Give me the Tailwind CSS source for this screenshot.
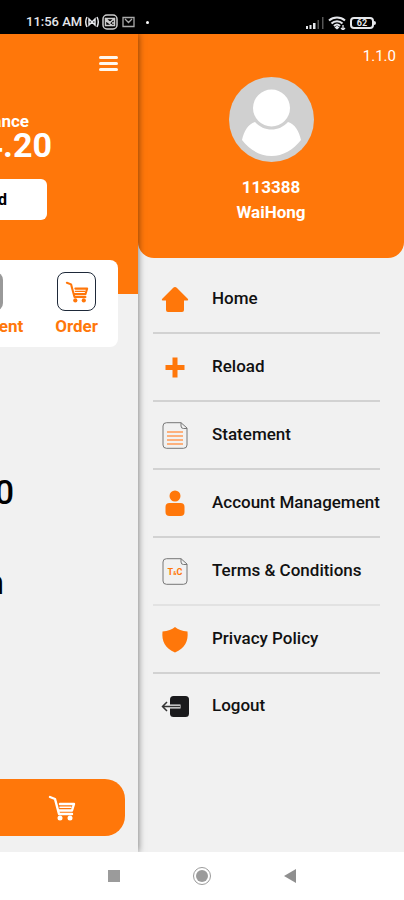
<!DOCTYPE html>
<html lang="en">
<head>
  <meta charset="UTF-8">
  <meta name="viewport" content="width=device-width, initial-scale=1.0">
  <title>Menu</title>
  <script src="https://cdn.jsdelivr.net/npm/@tailwindcss/browser@4"></script>
</head>
<body class="flex min-h-screen flex-col bg-white font-['Roboto','Liberation_Sans',sans-serif] text-black">

  <!-- Shared cart icon -->
  <svg class="hidden">
    <symbol id="cart" viewBox="0 0 28 26">
      <g fill="none" stroke="currentColor" stroke-width="2.400" stroke-linecap="round" stroke-linejoin="round">
        <path d="M2 2l5 2 4 15h13M12 9h14l-2 6.500H11" />
        <path d="M12 12.300h11" stroke-width="1.500" />
      </g>
      <circle cx="12" cy="23" r="2.500" fill="currentColor" />
      <circle cx="22" cy="23" r="2.500" fill="currentColor" />
    </symbol>
  </svg>

  <!-- Status bar -->
  <header class="flex h-[34px] items-end justify-between bg-black pr-7 pb-1 pl-[26px] text-gray-200">
    <div class="flex items-center gap-[3px]">
      <span class="text-[13px] leading-4 font-medium whitespace-nowrap">11:56 AM</span>
      <svg class="h-3 w-[14px]" viewBox="0 0 14 12" fill="none" stroke="currentColor" stroke-width="1.500">
        <path d="M2 1C.5 4 .5 8 2 11M12 1c1.500 3 1.500 7 0 10M4 3v6l3-3 3 3V3L7 6z" />
      </svg>
      <svg class="h-4 w-4" viewBox="0 0 16 16" fill="none" stroke="#ccc" stroke-width="1.500">
        <rect x="1" y="1" width="14" height="14" rx="4" />
        <path d="M3.500 4.500h9v7h-9zM3 4l5 4.500L13 4M3 6l8 6M10 9h3" />
      </svg>
      <svg class="ml-px h-3 w-[13px]" viewBox="0 0 13 12" fill="none" stroke="#aaa" stroke-width="1.300">
        <path d="M1 1.500h11v9H1zM3 3l3.500 3.500L10 3" />
      </svg>
      <span class="ml-2 h-[3px] w-[3px] rounded-full bg-white"></span>
    </div>
    <div class="flex items-center gap-1">
      <svg class="h-3 w-[19px]" viewBox="0 0 19 12" fill="currentColor">
        <path d="M1 9h2v3H1zM4.500 8h2v4h-2zM8 6h2.500v6H8z" />
        <path d="M12.500 3h1.500v9h-1.500zM17 0h1.500v12H17z" fill="#555" />
      </svg>
      <svg class="h-[14px] w-[18px]" viewBox="0 0 18 14" fill="none" stroke="currentColor" stroke-width="2">
        <path d="M1 4.500c4.500-4 11.500-4 16 0M3.500 7.500c3-3 8-3 11 0M6 10c1.800-1.800 4.200-1.800 6 0" />
        <path d="M9 9.500l2.500 2L9 13.500l-2.500-2z" fill="currentColor" stroke="none" />
        <path d="M15 9v5M13 12l2 2 2-2" stroke-width="1.300" />
      </svg>
      <div class="flex items-center">
        <span class="flex h-3 w-6 items-center justify-center rounded border-2 border-gray-200 text-[9px] leading-none font-bold">62</span>
        <span class="h-1 w-[2px] rounded-r bg-gray-200"></span>
      </div>
    </div>
  </header>

  <div class="flex flex-1">
    <!-- Page pushed to the left by the drawer -->
    <main class="relative z-10 flex w-[138px] shrink-0 flex-col overflow-hidden bg-[#f1f1f1] shadow-[0_0_7px_rgba(0,0,0,0.55)] [clip-path:inset(0_-12px_0_0)]">
      <section class="flex h-[260px] flex-col items-end bg-[#ff770a] text-white">
        <button type="button" aria-label="Menu" class="mt-[22px] mr-5 flex w-[19px] flex-col gap-[3px]">
          <span class="h-[3px] w-full rounded-full bg-orange-50"></span>
          <span class="h-[3px] w-full rounded-full bg-orange-50"></span>
          <span class="h-[3px] w-full rounded-full bg-orange-50"></span>
        </button>
        <p class="mt-10 mr-[109px] text-[17px] leading-5 font-bold">Balance</p>
        <p class="mr-[86px] text-[34px] leading-7 font-bold">4.20</p>
        <button type="button" class="mt-5 mr-[91px] h-[41px] rounded-md bg-white px-10 text-base font-bold text-black">Reload</button>
      </section>

      <section class="-mt-[34px] mr-5 flex h-[87px] justify-end gap-8 rounded-r-lg bg-white pr-5 text-[17px] leading-5 font-bold text-[#ff770a]">
        <a href="#" class="flex shrink-0 flex-col items-center gap-[5px] pt-3">
          <span class="h-[39px] w-[39px] rounded-lg bg-[#999]"></span>
          Statement
        </a>
        <a href="#" class="flex shrink-0 flex-col items-center gap-[5px] pt-3">
          <span class="flex h-[39px] w-[39px] items-center justify-center rounded-lg border border-gray-800">
            <svg class="h-[22px] w-6"><use href="#cart" /></svg>
          </span>
          Order
        </a>
      </section>

      <div class="mt-[125px] flex flex-col items-end text-[34px] leading-10 font-medium">
        <p class="mr-[124px]">0</p>
        <p class="mt-[50px] mr-[134px]">n</p>
      </div>

      <button type="button" aria-label="Cart" class="mt-auto mr-[13px] mb-4 flex h-[57px] items-center justify-end rounded-r-[20px] bg-[#ff770a] pr-[49px] text-white">
        <svg class="h-[26px] w-7"><use href="#cart" /></svg>
      </button>
    </main>

    <!-- Drawer -->
    <aside class="min-w-0 flex-1 bg-[#f1f1f1]">
      <div class="flex h-[224px] flex-col items-center rounded-b-2xl bg-[#ff770a] font-bold text-white">
        <span class="mt-3 mr-2 self-end text-[15px] leading-5 font-normal">1.1.0</span>
        <svg class="mt-[11px] h-[85px] w-[85px]" viewBox="0 0 85 85">
          <circle cx="42.500" cy="42.500" r="42.500" fill="#d0d0d0" />
          <circle cx="42.500" cy="31" r="18.500" fill="#fff" />
          <path d="M26 45c9 10 24 10 33 0 7 2 11 9 13 18-8 10-18 16-29.500 16S21 73 13 63c2-9 6-16 13-18z" fill="#fff" />
        </svg>
        <span class="mt-[15px] text-[17px] leading-5">113388</span>
        <span class="mt-[5px] text-[17px] leading-5">WaiHong</span>
      </div>

      <nav class="mt-2 mr-6 ml-[15px] text-[17px] font-medium text-[#111]">
        <a href="#" class="flex h-17 items-center gap-[23px] border-b-2 border-[#d2d2d2] pl-2">
          <svg class="h-[27px] w-7 shrink-0" viewBox="0 0 28 27" fill="#ff770a">
            <path d="M14 1q1 0 2 1l11 11q.8 1.500-1 1.500h-3V24q0 2-2 2H7q-2 0-2-2v-9.500H2Q.2 14.500 1 13L12 2q1-1 2-1z" />
          </svg>
          Home
        </a>
        <a href="#" class="flex h-17 items-center gap-[23px] border-b-2 border-[#d2d2d2] pl-2">
          <svg class="h-[27px] w-7 shrink-0" viewBox="0 0 28 27" fill="none" stroke="#ff770a" stroke-width="5">
            <path d="M14 3.500v20M4.500 13.500h19" />
          </svg>
          Reload
        </a>
        <a href="#" class="flex h-17 items-center gap-[23px] border-b-2 border-[#d2d2d2] pl-2">
          <svg class="h-[27px] w-7 shrink-0" viewBox="0 0 28 27" fill="none">
            <path d="M20 .7H5.500Q2 .7 2 4v19q0 3.300 3.500 3.300h17q3.500 0 3.500-3.300V6zM20 .7V4q0 2.500 2.500 2.500H26" stroke="#777" />
            <path d="M6 10h16M6 14h16M6 18h16M6 22h16" stroke="#ff9a55" stroke-width="1.300" />
          </svg>
          Statement
        </a>
        <a href="#" class="flex h-17 items-center gap-[23px] border-b-2 border-[#d2d2d2] pl-2">
          <svg class="h-[27px] w-7 shrink-0" viewBox="0 0 28 27" fill="#ff770a">
            <circle cx="14" cy="6" r="5.500" />
            <rect x="4.500" y="13" width="19" height="13" rx="4" />
          </svg>
          <span class="whitespace-nowrap">Account Management</span>
        </a>
        <a href="#" class="flex h-17 items-center gap-[23px] border-b-2 border-[#e2e2e2] pl-2">
          <svg class="h-[27px] w-7 shrink-0" viewBox="0 0 28 27" fill="none">
            <path d="M20 .7H5.500Q2 .7 2 4v19q0 3.300 3.500 3.300h17q3.500 0 3.500-3.300V6zM20 .7V4q0 2.500 2.500 2.500H26" stroke="#777" />
            <text x="14" y="17" text-anchor="middle" font-size="9" font-weight="700" fill="#ff770a">T<tspan font-size="5">&amp;</tspan>C</text>
          </svg>
          Terms &amp; Conditions
        </a>
        <a href="#" class="flex h-17 items-center gap-[23px] border-b-2 border-[#d2d2d2] pl-2">
          <svg class="h-[27px] w-7 shrink-0" viewBox="0 0 28 27" fill="#ff770a">
            <path d="M14 1c3 2.500 7 4 12.500 4.500C27.500 15 24 22 14 26.500 4 22 .5 15 1.500 5.500 7 5 11 3.500 14 1z" />
          </svg>
          Privacy Policy
        </a>
        <a href="#" class="flex h-16 items-center gap-[23px] pl-2">
          <svg class="h-[27px] w-7 shrink-0" viewBox="0 0 28 27" fill="none">
            <rect x="9" y="3" width="19" height="21" rx="3.500" fill="#1a1a1c" />
            <path d="M9 13.500h10.500" stroke="#f1f1f1" stroke-width="4" />
            <path d="M2 13.500h17M6 9l-4.500 4.500L6 18" stroke="#333" stroke-width="1.500" />
          </svg>
          Logout
        </a>
      </nav>
    </aside>
  </div>

  <!-- System navigation -->
  <footer class="flex h-12 items-center justify-center gap-[73px] bg-white">
    <button type="button" aria-label="Recent apps" class="h-3 w-3 bg-[#9b9b9b]"></button>
    <button type="button" aria-label="Home" class="flex h-[18px] w-[18px] items-center justify-center rounded-full border border-[#9b9b9b]">
      <span class="h-3 w-3 rounded-full bg-[#9b9b9b]"></span>
    </button>
    <button type="button" aria-label="Back">
      <svg class="h-[14px] w-3" viewBox="0 0 12 14" fill="#8f8f8f"><path d="M12 0v14L0 7z" /></svg>
    </button>
  </footer>
</body>
</html>
